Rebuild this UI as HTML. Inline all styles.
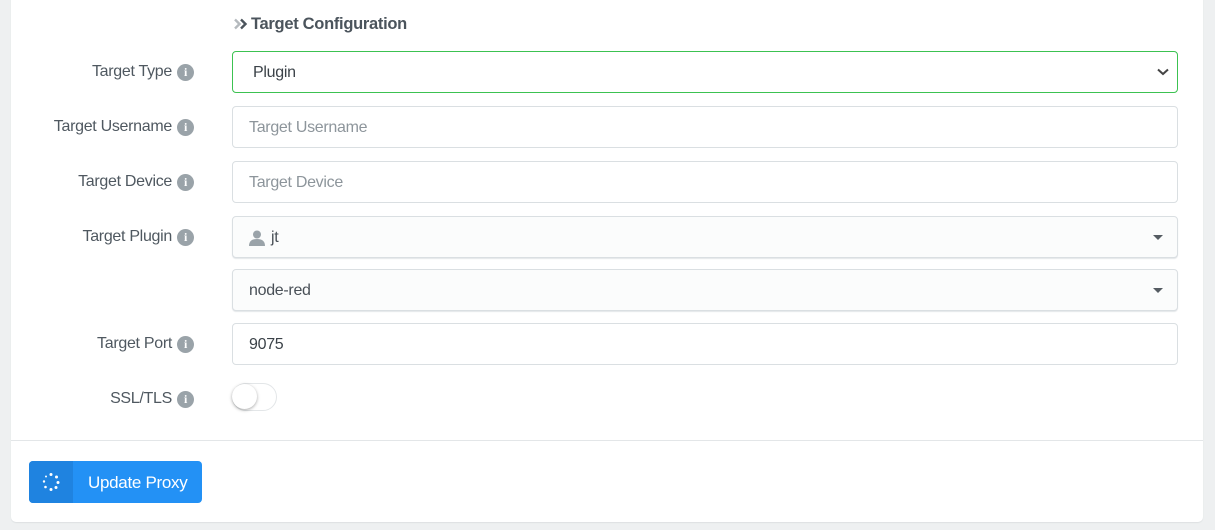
<!DOCTYPE html>
<html><head><style>
*{box-sizing:border-box}
body{margin:0;width:1215px;height:530px;background:#eef0f1;font-family:"Liberation Sans",sans-serif;overflow:hidden;position:relative}
.card{position:absolute;left:11px;top:-5px;width:1192px;height:527px;background:#fff;border-radius:0 0 5px 5px;box-shadow:0 1px 1px #dde0e2}
.abs{position:absolute}
.lbl{position:absolute;right:1021px;font-size:16px;color:#4f5860;white-space:nowrap;display:flex;align-items:center;letter-spacing:-0.3px}
.lbl i{display:inline-block;width:17px;height:17px;border-radius:50%;background:#9aa3a9;color:#fff;font-style:normal;font-weight:bold;font-size:12px;line-height:17px;text-align:center;margin-left:5px;font-family:"Liberation Serif",serif}
.inp{position:absolute;left:232px;width:946px;height:42px;border:1px solid #dadfe2;border-radius:4px;font-size:16px;color:#495057;padding-left:16px;padding-top:2px;display:flex;align-items:center;letter-spacing:-0.3px}
.ph{color:#8d959b}
.s2{background:#fbfcfc;box-shadow:0 1px 1px #e3e6e8}
.caret{position:absolute;right:14px;top:18px;border-left:5px solid transparent;border-right:5px solid transparent;border-top:5px solid #555c62}
</style></head><body>
<div class="card"></div>
<svg class="abs" style="left:233px;top:18px" width="16" height="12" viewBox="0 0 16 12"><path d="M2 1.5l4.5 4.5-4.5 4.5" stroke="#b5babe" stroke-width="2.4" fill="none"/><path d="M8 1.5l4.5 4.5-4.5 4.5" stroke="#4b545c" stroke-width="2.4" fill="none"/></svg>
<div class="abs" style="left:251px;top:15px;font-size:16.5px;font-weight:bold;color:#4b545c;letter-spacing:-0.3px">Target Configuration</div>

<div class="lbl" style="top:63px">Target Type<i>i</i></div>
<div class="inp" style="top:51px;border-color:#3cc251;padding-left:20px;color:#3b4248">Plugin
<svg class="abs" style="right:8px;top:16px" width="12" height="8" viewBox="0 0 12 8"><path d="M1 1.5l5 4.5 5-4.5" stroke="#444" stroke-width="2" fill="none"/></svg></div>

<div class="lbl" style="top:118px">Target Username<i>i</i></div>
<div class="inp" style="top:106px"><span class="ph">Target Username</span></div>

<div class="lbl" style="top:173px">Target Device<i>i</i></div>
<div class="inp" style="top:161px"><span class="ph">Target Device</span></div>

<div class="lbl" style="top:228px">Target Plugin<i>i</i></div>
<div class="inp s2" style="top:216px"><svg width="16" height="16" viewBox="0 0 16 16" style="margin-right:6px"><circle cx="8" cy="4.5" r="4" fill="#9aa3a9"/><path d="M0 16c0-5 3-7 8-7s8 2 8 7z" fill="#9aa3a9"/></svg>jt<span class="caret"></span></div>

<div class="inp s2" style="top:269px">node-red<span class="caret"></span></div>

<div class="lbl" style="top:335px">Target Port<i>i</i></div>
<div class="inp" style="top:323px;color:#3b4248">9075</div>

<div class="lbl" style="top:390px">SSL/TLS<i>i</i></div>
<div class="abs" style="left:232px;top:383px;width:45px;height:28px;border:1px solid #e3e6e8;border-radius:14px"></div>
<div class="abs" style="left:232px;top:384px;width:25px;height:25px;border-radius:50%;background:#fff;box-shadow:0 1px 3px rgba(0,0,0,.35)"></div>

<div class="abs" style="left:11px;top:440px;width:1192px;height:1px;background:#e3e6e8"></div>

<div class="abs" style="left:29px;top:461px;width:173px;height:42px;border-radius:4px;background:#2391f5;overflow:hidden">
<div class="abs" style="left:0;top:0;width:44px;height:42px;background:#1f83e0"></div>
<svg class="abs" style="left:12px;top:11px" width="20" height="20" viewBox="0 0 20 20" fill="#fff"><circle cx="10" cy="2.5" r="1.5"/><circle cx="15.5" cy="5" r="1.5"/><circle cx="17" cy="10.5" r="1.5"/><circle cx="15" cy="15.5" r="1.5"/><circle cx="10" cy="17.5" r="1.5"/><circle cx="4.5" cy="15" r="1.3"/><circle cx="3" cy="9.5" r="1.2"/><circle cx="5" cy="4.5" r="1"/></svg>
<div class="abs" style="left:59px;top:12px;color:#fff;font-size:17px;letter-spacing:-0.3px">Update Proxy</div>
</div>
</body></html>
